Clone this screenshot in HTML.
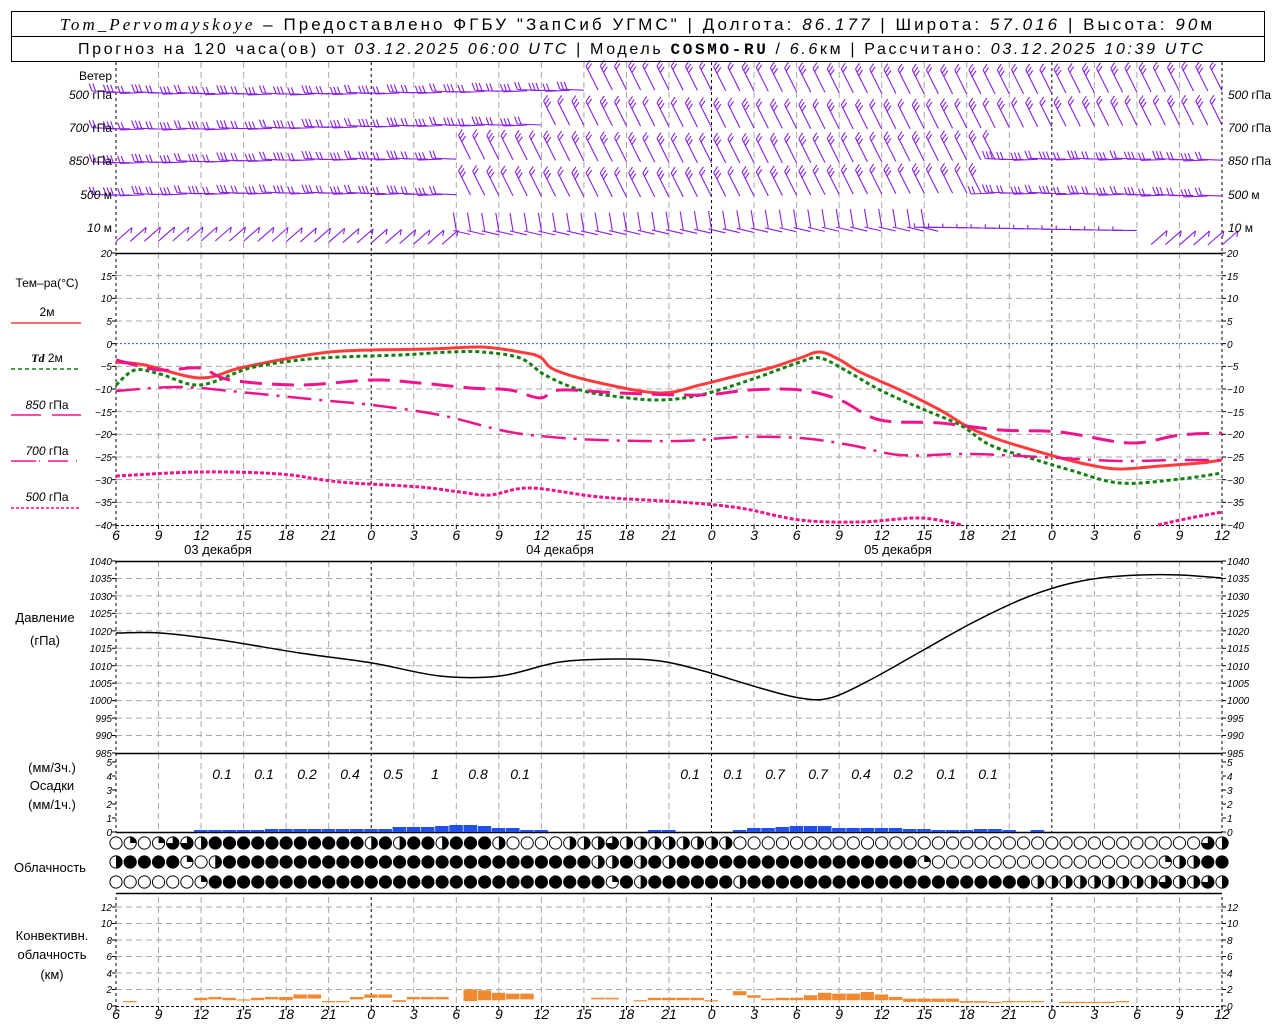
<!DOCTYPE html>
<html><head><meta charset="utf-8"><style>
html,body{margin:0;padding:0;background:#fff;}
svg{display:block;}
text{font-family:"Liberation Sans","DejaVu Sans",sans-serif;fill:#000;}
.i{font-style:italic;}
.yl{font-size:10px;font-style:italic;}
.tl{font-size:14px;font-style:italic;}
.lb{font-size:12px;}
</style></head><body>
<svg id="s" width="1280" height="1024" viewBox="0 0 1280 1024" xmlns="http://www.w3.org/2000/svg">
<rect width="1280" height="1024" fill="#fff"/>
<g id="grid"></g>
<g id="data"></g>
<!-- header -->
<rect x="11.5" y="11.5" width="1253" height="50" fill="none" stroke="#000"/>
<line x1="11" y1="36.5" x2="1265" y2="36.5" stroke="#000"/>
<text x="60" y="30" font-size="17" textLength="1152" lengthAdjust="spacing"><tspan class="i" font-family="Liberation Serif">Tom_Pervomayskoye</tspan> – Предоставлено ФГБУ "ЗапСиб УГМС" | Долгота: <tspan class="i">86.177</tspan> | Широта: <tspan class="i">57.016</tspan> | Высота: <tspan class="i">90</tspan>м</text>
<text x="78" y="54" font-size="16" textLength="1125" lengthAdjust="spacing">Прогноз на 120 часа(ов) от <tspan class="i">03.12.2025 06:00 UTC</tspan> | Модель <tspan font-family="Liberation Mono" font-weight="bold">COSMO-RU</tspan> / <tspan class="i">6.6</tspan>км | Рассчитано: <tspan class="i">03.12.2025 10:39 UTC</tspan></text>

<!-- wind labels -->
<g class="lb" font-size="11">
<text x="112" y="80" text-anchor="end">Ветер</text>
<text x="112" y="99" text-anchor="end"><tspan class="i">500</tspan> гПа</text>
<text x="112" y="132" text-anchor="end"><tspan class="i">700</tspan> гПа</text>
<text x="112" y="165" text-anchor="end"><tspan class="i">850</tspan> гПа</text>
<text x="112" y="199" text-anchor="end"><tspan class="i">500</tspan> м</text>
<text x="112" y="232" text-anchor="end"><tspan class="i">10</tspan>   м</text>
<text x="1228" y="99"><tspan class="i">500</tspan> гПа</text>
<text x="1228" y="132"><tspan class="i">700</tspan> гПа</text>
<text x="1228" y="165"><tspan class="i">850</tspan> гПа</text>
<text x="1228" y="199"><tspan class="i">500</tspan> м</text>
<text x="1228" y="232"><tspan class="i">10</tspan>   м</text>
</g>

<!-- temperature legend -->
<g font-size="12">
<text x="47" y="287" text-anchor="middle">Тем–ра(°C)</text>
<text x="47" y="316" text-anchor="middle">2м</text>
<line x1="11" y1="323" x2="81" y2="323" stroke="#ff3c3c" stroke-width="1.5"/>
<text x="47" y="362" text-anchor="middle"><tspan class="i" font-weight="bold" font-family="Liberation Serif">Td</tspan>   2м</text>
<line x1="11" y1="369" x2="79" y2="369" stroke="#108010" stroke-width="1.5" stroke-dasharray="4 3"/>
<text x="47" y="409" text-anchor="middle"><tspan class="i">850</tspan> гПа</text>
<path d="M11 415H41M52 415H81" stroke="#f0148c" stroke-width="1.5"/>
<text x="47" y="455" text-anchor="middle"><tspan class="i">700</tspan> гПа</text>
<path d="M11 461H36M39 461H40M48 461H68M76 461H77" stroke="#f0148c" stroke-width="1.5"/>
<text x="47" y="501" text-anchor="middle"><tspan class="i">500</tspan> гПа</text>
<line x1="11" y1="508" x2="79" y2="508" stroke="#f0148c" stroke-width="1.5" stroke-dasharray="3 2"/>
</g>

<g class="yl">
<text x="112" y="257" text-anchor="end">20</text><text x="112" y="280" text-anchor="end">15</text><text x="112" y="302" text-anchor="end">10</text><text x="112" y="325" text-anchor="end">5</text><text x="112" y="348" text-anchor="end">0</text><text x="112" y="370" text-anchor="end">−5</text><text x="112" y="393" text-anchor="end">−10</text><text x="112" y="416" text-anchor="end">−15</text><text x="112" y="438" text-anchor="end">−20</text><text x="112" y="461" text-anchor="end">−25</text><text x="112" y="484" text-anchor="end">−30</text><text x="112" y="506" text-anchor="end">−35</text><text x="112" y="529" text-anchor="end">−40</text>
<text x="1227" y="257">20</text><text x="1227" y="280">15</text><text x="1227" y="302">10</text><text x="1227" y="325">5</text><text x="1227" y="348">0</text><text x="1227" y="370">−5</text><text x="1227" y="393">−10</text><text x="1227" y="416">−15</text><text x="1227" y="438">−20</text><text x="1227" y="461">−25</text><text x="1227" y="484">−30</text><text x="1227" y="506">−35</text><text x="1227" y="529">−40</text>
<!-- pressure -->
<text x="112" y="565" text-anchor="end">1040</text><text x="112" y="582" text-anchor="end">1035</text><text x="112" y="600" text-anchor="end">1030</text><text x="112" y="617" text-anchor="end">1025</text><text x="112" y="635" text-anchor="end">1020</text><text x="112" y="652" text-anchor="end">1015</text><text x="112" y="670" text-anchor="end">1010</text><text x="112" y="687" text-anchor="end">1005</text><text x="112" y="704" text-anchor="end">1000</text><text x="112" y="722" text-anchor="end">995</text><text x="112" y="739" text-anchor="end">990</text><text x="112" y="757" text-anchor="end">985</text>
<text x="1227" y="565">1040</text><text x="1227" y="582">1035</text><text x="1227" y="600">1030</text><text x="1227" y="617">1025</text><text x="1227" y="635">1020</text><text x="1227" y="652">1015</text><text x="1227" y="670">1010</text><text x="1227" y="687">1005</text><text x="1227" y="704">1000</text><text x="1227" y="722">995</text><text x="1227" y="739">990</text><text x="1227" y="757">985</text>
<!-- precip -->
<text x="112" y="836" text-anchor="end">0</text><text x="112" y="822" text-anchor="end">1</text><text x="112" y="808" text-anchor="end">2</text><text x="112" y="794" text-anchor="end">3</text><text x="112" y="780" text-anchor="end">4</text><text x="112" y="766" text-anchor="end">5</text>
<text x="1227" y="836">0</text><text x="1227" y="822">1</text><text x="1227" y="808">2</text><text x="1227" y="794">3</text><text x="1227" y="780">4</text><text x="1227" y="766">5</text>
<!-- conv -->
<text x="112" y="1010" text-anchor="end">0</text><text x="112" y="993" text-anchor="end">2</text><text x="112" y="977" text-anchor="end">4</text><text x="112" y="960" text-anchor="end">6</text><text x="112" y="944" text-anchor="end">8</text><text x="112" y="927" text-anchor="end">10</text><text x="112" y="911" text-anchor="end">12</text>
<text x="1227" y="1010">0</text><text x="1227" y="993">2</text><text x="1227" y="977">4</text><text x="1227" y="960">6</text><text x="1227" y="944">8</text><text x="1227" y="927">10</text><text x="1227" y="911">12</text>
</g>

<!-- time labels -->
<g class="tl" text-anchor="middle">
<text x="116" y="540">6</text><text x="158.5" y="540">9</text><text x="201.1" y="540">12</text><text x="243.6" y="540">15</text><text x="286.2" y="540">18</text><text x="328.7" y="540">21</text><text x="371.2" y="540">0</text><text x="413.8" y="540">3</text><text x="456.3" y="540">6</text><text x="498.9" y="540">9</text><text x="541.4" y="540">12</text><text x="583.9" y="540">15</text><text x="626.5" y="540">18</text><text x="669" y="540">21</text><text x="711.6" y="540">0</text><text x="754.1" y="540">3</text><text x="796.6" y="540">6</text><text x="839.2" y="540">9</text><text x="881.7" y="540">12</text><text x="924.3" y="540">15</text><text x="966.8" y="540">18</text><text x="1009.3" y="540">21</text><text x="1051.9" y="540">0</text><text x="1094.4" y="540">3</text><text x="1137" y="540">6</text><text x="1179.5" y="540">9</text><text x="1222" y="540">12</text>
<text x="116" y="1019">6</text><text x="158.5" y="1019">9</text><text x="201.1" y="1019">12</text><text x="243.6" y="1019">15</text><text x="286.2" y="1019">18</text><text x="328.7" y="1019">21</text><text x="371.2" y="1019">0</text><text x="413.8" y="1019">3</text><text x="456.3" y="1019">6</text><text x="498.9" y="1019">9</text><text x="541.4" y="1019">12</text><text x="583.9" y="1019">15</text><text x="626.5" y="1019">18</text><text x="669" y="1019">21</text><text x="711.6" y="1019">0</text><text x="754.1" y="1019">3</text><text x="796.6" y="1019">6</text><text x="839.2" y="1019">9</text><text x="881.7" y="1019">12</text><text x="924.3" y="1019">15</text><text x="966.8" y="1019">18</text><text x="1009.3" y="1019">21</text><text x="1051.9" y="1019">0</text><text x="1094.4" y="1019">3</text><text x="1137" y="1019">6</text><text x="1179.5" y="1019">9</text><text x="1222" y="1019">12</text>
</g>
<g font-size="13" text-anchor="middle">
<text x="218" y="554">03 декабря</text><text x="560" y="554">04 декабря</text><text x="898" y="554">05 декабря</text>
<text x="45" y="622">Давление</text><text x="45" y="645">(гПа)</text>
<text x="52" y="772">(мм/3ч.)</text><text x="52" y="790">Осадки</text><text x="52" y="809">(мм/1ч.)</text>
<text x="50" y="872">Облачность</text>
<text x="52" y="940">Конвективн.</text><text x="52" y="959">облачность</text><text x="52" y="979">(км)</text>
</g>
<g class="tl" font-size="13" text-anchor="middle">
<text x="222" y="779">0.1</text><text x="264" y="779">0.1</text><text x="307" y="779">0.2</text><text x="350" y="779">0.4</text><text x="393" y="779">0.5</text><text x="435" y="779">1</text><text x="478" y="779">0.8</text><text x="520" y="779">0.1</text>
<text x="690" y="779">0.1</text><text x="733" y="779">0.1</text><text x="775" y="779">0.7</text><text x="818" y="779">0.7</text><text x="861" y="779">0.4</text><text x="903" y="779">0.2</text><text x="946" y="779">0.1</text><text x="988" y="779">0.1</text>
</g>
</svg>
<script>
(function(){
var NS="http://www.w3.org/2000/svg";
var G=document.getElementById('grid'),D=document.getElementById('data');
function el(p,t,a){var e=document.createElementNS(NS,t);for(var k in a)e.setAttribute(k,a[k]);p.appendChild(e);return e;}
function X(h){return 116+h*14.1795;}
var panels=[[62,253],[253,525],[561,753],[753,832],[897,1006]];
for(var i=0;i<=26;i++){var x=116+i*42.538;var mid=(i%8==6);var edge=(i==0||i==26);
 panels.forEach(function(p){el(G,'line',{x1:x,x2:x,y1:p[0],y2:p[1],stroke:(mid||edge)?'#000':'#a8a8a8','stroke-dasharray':(mid||edge)?'3 3':'6 4','stroke-width':1});});
 [[525,529],[1006,1010]].forEach(function(t){el(G,'line',{x1:x,x2:x,y1:t[0],y2:t[1],stroke:'#000'});});
}
function hgrid(y){el(G,'line',{x1:116,x2:1222,y1:y,y2:y,stroke:'#a8a8a8','stroke-dasharray':'6 4'});}
for(var v=15;v>=-35;v-=5){var y=253+(20-v)*4.533;if(v==0)el(G,'line',{x1:116,x2:1222,y1:y,y2:y,stroke:'#3050ff','stroke-dasharray':'2 2'});else hgrid(y);}
for(var p=1035;p>985;p-=5)hgrid(561+(1040-p)*3.4909);
for(var k=2;k<=12;k+=2)hgrid(1006-k*8.25);
function ticks(y0,y1,n){for(var j=0;j<=n;j++){var y=y0+(y1-y0)*j/n;el(G,'line',{x1:112,x2:116,y1:y,y2:y,stroke:'#000'});el(G,'line',{x1:1222,x2:1226,y1:y,y2:y,stroke:'#000'});}}
ticks(253,525,12);ticks(561,753,11);ticks(762,832,5);ticks(907,1006,6);
[[253],[561],[753],[832],[893]].forEach(function(a){el(G,'line',{x1:116,x2:1222,y1:a[0]+.5,y2:a[0]+.5,stroke:'#000','stroke-width':1.5});});
el(G,'line',{x1:116,x2:1222,y1:525.5,y2:525.5,stroke:'#000','stroke-dasharray':'3 2'});
el(G,'line',{x1:116,x2:1222,y1:1006.5,y2:1006.5,stroke:'#000','stroke-dasharray':'3 2'});
// smooth curves (Catmull-Rom)
function path(pts,attrs){var d='M'+pts[0][0]+' '+pts[0][1];
 for(var i=0;i<pts.length-1;i++){var p0=pts[i-1]||pts[i],p1=pts[i],p2=pts[i+1],p3=pts[i+2]||p2;
  var c1x=p1[0]+(p2[0]-p0[0])/6,c1y=p1[1]+(p2[1]-p0[1])/6,c2x=p2[0]-(p3[0]-p1[0])/6,c2y=p2[1]-(p3[1]-p1[1])/6;
  d+='C'+c1x.toFixed(1)+' '+c1y.toFixed(1)+' '+c2x.toFixed(1)+' '+c2y.toFixed(1)+' '+p2[0]+' '+p2[1];}
 attrs.d=d;attrs.fill='none';el(D,'path',attrs);}
path([[116,362],[145,365],[200,378],[240,368],[290,358],[330,352],[372,350],[430,349],[482,347],[520,352],[540,357],[555,370],[600,383],[660,393],[700,385],[740,375],[770,368],[800,358],[820,352],[840,360],[860,372],[900,390],[940,410],[970,428],[1000,440],[1050,455],[1090,465],[1120,469],[1160,466],[1200,463],[1222,460]],{stroke:'#ff3c3c','stroke-width':3});
path([[116,385],[135,370],[160,374],[200,385],[250,368],[300,360],[340,357],[400,355],[450,352],[482,352],[520,358],[545,375],[580,390],[620,397],[660,400],[700,395],[750,380],[800,362],[820,358],[845,370],[880,390],[920,408],[960,425],[990,445],[1030,458],[1070,470],[1120,483],[1180,479],[1222,473]],{stroke:'#108010','stroke-width':3,'stroke-dasharray':'4 3'});
path([[116,360],[160,370],[200,368],[230,380],[300,385],[372,380],[420,383],[470,388],[510,390],[540,398],[560,390],[620,393],[700,395],[750,390],[800,390],[840,400],[880,420],[940,423],[1000,430],[1060,432],[1130,443],[1180,435],[1222,433]],{stroke:'#f0148c','stroke-width':3,'stroke-dasharray':'22 10'});
path([[116,391],[180,387],[250,393],[320,400],[372,405],[440,415],[500,430],[540,436],[600,440],[680,441],[740,437],[800,438],[850,445],[900,455],[960,454],[1000,455],[1060,458],[1120,461],[1180,460],[1222,460]],{stroke:'#f0148c','stroke-width':2.5,'stroke-dasharray':'24 8 3 8'});
path([[116,476],[200,472],[280,474],[340,482],[420,487],[460,492],[490,495],[530,488],[600,497],[680,502],[740,508],[800,520],[860,522],[920,518],[962,525]],{stroke:'#f0148c','stroke-width':3,'stroke-dasharray':'4 2'});
path([[1158,525],[1190,518],[1222,512]],{stroke:'#f0148c','stroke-width':3,'stroke-dasharray':'4 2'});
path([[116,633],[160,633],[220,640],[300,653],[372,663],[440,676],[500,676],[560,662],[620,659],[660,661],[700,670],[760,688],[800,698],[830,698],[870,680],[920,652],[970,624],[1020,600],[1060,586],[1100,578],[1140,575],[1180,575],[1222,578]],{stroke:'#000','stroke-width':1.5});
var pr={6:2,7:2,8:2,9:2,10:2,11:3,12:3,13:3,14:3,15:3,16:3,17:3,18:3,19:3,20:5,21:5,22:5,23:6,24:7,25:7,26:6,27:4,28:4,29:2,30:2,38:2,39:2,44:2,45:4,46:4,47:5,48:6,49:6,50:6,51:4,52:4,53:4,54:4,55:4,56:3,57:3,58:2,59:2,60:2,61:3,62:3,63:2,65:2};
for(var h in pr){h=+h;el(D,'rect',{x:X(h)-7,y:832-pr[h],width:13.5,height:pr[h],fill:'#2050e8'});}
var cv=[[1,0.6,0.5],[6,1.0,0.7],[7,1.1,0.8],[8,1.0,0.7],[9,0.8,0.7],[10,1.0,0.7],[11,1.1,0.8],[12,1.1,0.7],[13,1.4,0.9],[14,1.4,0.9],[15,0.6,0.5],[16,0.6,0.5],[17,1.1,0.8],[18,1.4,1.0],[19,1.4,1.0],[20,0.7,0.5],[21,1.1,0.8],[22,1.1,0.8],[23,1.1,0.8],[25,2.0,0.6],[26,1.9,0.7],[27,1.6,0.7],[28,1.5,0.8],[29,1.5,0.8],[34,1.0,0.8],[35,1.0,0.8],[37,0.7,0.6],[38,1.0,0.7],[39,1.0,0.7],[40,1.0,0.7],[41,1.0,0.7],[42,0.7,0.6],[44,1.8,1.3],[45,1.3,1.0],[46,0.9,0.7],[47,1.0,0.7],[48,1.0,0.7],[49,1.3,0.7],[50,1.6,0.7],[51,1.5,0.7],[52,1.5,0.7],[53,1.7,0.7],[54,1.4,0.7],[55,1.1,0.7],[56,0.9,0.5],[57,0.9,0.5],[58,0.9,0.5],[59,0.9,0.5],[60,0.6,0.4],[61,0.6,0.4],[62,0.5,0.4],[63,0.6,0.5],[64,0.6,0.5],[65,0.6,0.5],[67,0.5,0.4],[68,0.5,0.4],[69,0.5,0.4],[70,0.5,0.4],[71,0.6,0.5]];
cv.forEach(function(c){var yt=1006-c[1]*8.25,yb=1006-c[2]*8.25;el(D,'rect',{x:X(c[0])-7,y:yt,width:13.5,height:Math.max(1.2,yb-yt),fill:'#f08a30'});});
var rows=[
 "OQOQ33HFFFFFFFFFFF"+"HFHFFHFFFH"+"OOOOHHH3HH"+"HHHHHH"+"OOOOOOOOOOOOOOOOOOOOOOOOOOOOOOOO"+"O3H",
 "HFFFFQOH"+"FFFFFFFFFFFFFFFFFFFFFFFFFF"+"HHFHFHF"+"FFFFFFFFFFFFFFFF"+"Q"+"OOOOOOOOOOOOOOOO"+"QHHFF",
 "OOOOOOQ"+"FFFFFFFFFFFFFFFFFFFFFFFFFFFF"+"QFH"+"FFFFFF"+"H"+"FFFFFFFFFFFFFFFFFFFF"+"HHHHHHHHH3HH3H"];
var ry=[843,862,882],r=6.6;
rows.forEach(function(s,ri){for(var h=0;h<=78;h++){var c=s[h]||'O',cx=X(h),cy=ry[ri];
 if(c=='F'){el(D,'circle',{cx:cx,cy:cy,r:r,fill:'#000'});continue;}
 el(D,'circle',{cx:cx,cy:cy,r:r-0.5,fill:'#fff',stroke:'#000','stroke-width':1});
 if(c=='H')el(D,'path',{d:'M'+cx+' '+(cy-r)+'A'+r+' '+r+' 0 0 1 '+cx+' '+(cy+r)+'Z',fill:'#000'});
 if(c=='Q')el(D,'path',{d:'M'+cx+' '+cy+'V'+(cy-r)+'A'+r+' '+r+' 0 0 1 '+(cx+r)+' '+cy+'Z',fill:'#000'});
 if(c=='3')el(D,'path',{d:'M'+cx+' '+cy+'V'+(cy-r)+'A'+r+' '+r+' 0 1 1 '+(cx-r)+' '+cy+'Z',fill:'#000'});
}});
var wy=[92,127,161,195,229],col='#8a1ee6';
function barb(x,y,dx,dy,bx,by,n,bl){var tx=x+dx,ty=y+dy,L=Math.sqrt(dx*dx+dy*dy),ux=dx/L,uy=dy/L;
 var d='M'+x.toFixed(1)+' '+y.toFixed(1)+'L'+tx.toFixed(1)+' '+ty.toFixed(1);
 for(var k=0;k<n;k++){var sx=tx-ux*k*3.6,sy=ty-uy*k*3.6;d+='M'+sx.toFixed(1)+' '+sy.toFixed(1)+'l'+(bx*bl).toFixed(1)+' '+(by*bl).toFixed(1);}
 el(D,'path',{d:d,stroke:col,'stroke-width':1.1,fill:'none'});}
for(var h=0;h<=78;h++){var x=X(h);
 for(var L=0;L<5;L++){var y=wy[L]+Math.sin(h*0.13+L)*2;
  var diag;
  if(L==0)diag=h>=34;else if(L==1)diag=h>=31;else if(L==2)diag=h>=25&&h<63;else if(L==3)diag=h>=25&&h<62;else diag=false;
  if(L<4){
   if(diag)barb(x,y,-12,-24,0.55,-0.83,(h%2)?3:2,7);
   else barb(x,y,-24,(h%3)-1,-0.35,-0.94,(h%2)?3:2,8);
  }else{
   if(h<24||h>72)barb(x,y+14,16,-14,-0.2,0.98,1,6);
   else if(h<58)barb(x,y,-3,-18,0.1,-1,1,0);
   else barb(x,y,-24,0,0,-1,1,4);
   if(h>=24&&h<58)el(D,'line',{x1:x-3,y1:y,x2:x+14,y2:y+4,stroke:col,'stroke-width':1.1});
  }
 }
}
})();
</script>
</body></html>
